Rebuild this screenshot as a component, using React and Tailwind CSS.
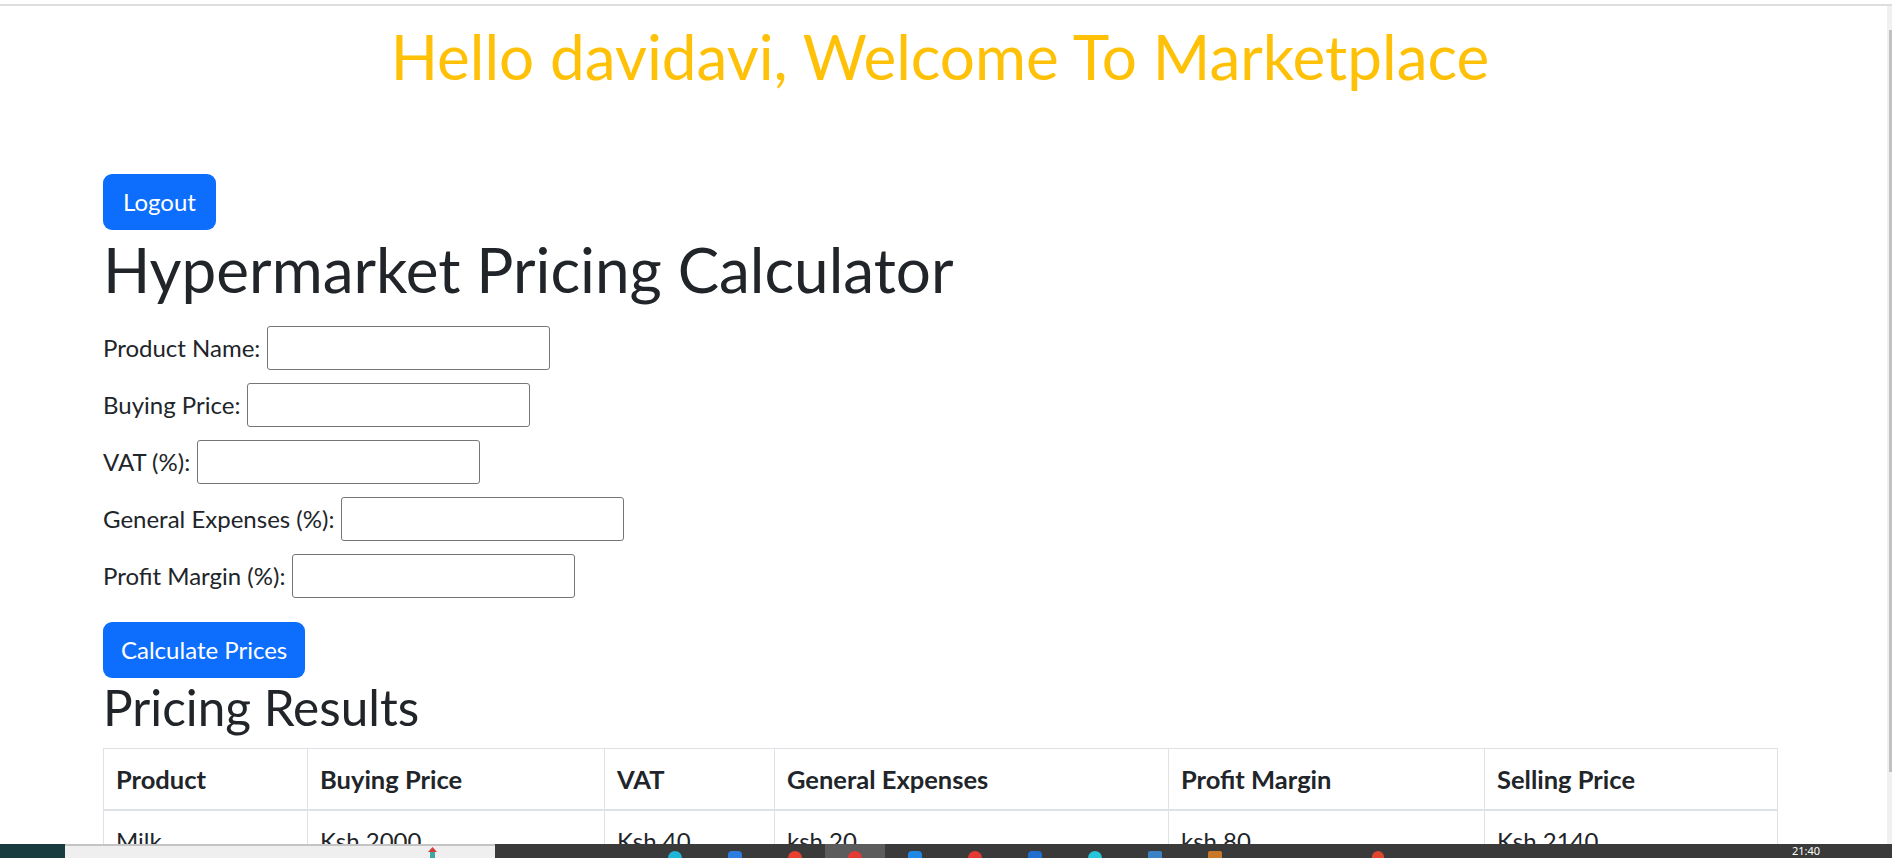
const FONT = { fontFamily: "Lato, 'Noto Sans', sans-serif" };

const fields = [
  "Product Name:",
  "Buying Price:",
  "VAT (%):",
  "General Expenses (%):",
  "Profit Margin (%):",
];

const columns = [
  { label: "Product", w: "w-[204px]" },
  { label: "Buying Price", w: "w-[297px]" },
  { label: "VAT", w: "w-[170px]" },
  { label: "General Expenses", w: "w-[394px]" },
  { label: "Profit Margin", w: "w-[316px]" },
  { label: "Selling Price", w: "w-[293px]" },
];

const rows = [["Milk", "Ksh 2000", "Ksh 40", "ksh 20", "ksh 80", "Ksh 2140"]];

// taskbar app icons, only their tops peek above the screen edge
const apps = [
  ["bg-[#1fb5d6]", "rounded-full"],
  ["bg-[#2d7de0]", "rounded-sm"],
  ["bg-[#e8402f]", "rounded-full"],
  ["bg-[#e53935]", "rounded-full", true],
  ["bg-[#1e88e5]", "rounded-sm"],
  ["bg-[#e53935]", "rounded-full"],
  ["bg-[#1e6fd0]", "rounded-sm"],
  ["bg-[#26c6da]", "rounded-full"],
  ["bg-[#3b82c4]", "rounded-[2px]"],
  ["bg-[#c9782a]", "rounded-[2px]"],
];

function Taskbar() {
  return (
    <div className="fixed left-0 right-0 bottom-0 h-[14px] flex bg-[#3a3a3a] overflow-hidden">
      <div className="w-[65px] bg-[#183b3f]" />
      <div className="w-[430px] bg-[#efefef] border-t-2 border-[#c4c4c4] flex justify-end pr-[58px] pt-[1px]">
        <div className="flex flex-col items-center">
          <div className="w-[9px] h-[5px] bg-[#d73a3a] [clip-path:polygon(50%_0,100%_100%,0_100%)]" />
          <div className="w-[5px] h-[6px] bg-[#3fa7a0]" />
        </div>
      </div>
      <div className="flex-1 flex pl-[150px]">
        {apps.map(([bg, r, active], i) => (
          <div key={i} className={`w-[60px] flex justify-center pt-[7px] ${active ? "bg-[#5c5c5c]" : ""}`}>
            <div className={`w-[14px] h-[14px] ${bg} ${r}`} />
          </div>
        ))}
        <div className="w-[103px]" />
        <div className="w-[60px] flex justify-center pt-[7px]">
          <div className="w-[12px] h-[12px] bg-[#e0452d] rounded-full" />
        </div>
        <div className="ml-auto mr-[72px] pt-[1px] text-[11px] leading-none text-white" style={{ fontFamily: "'Noto Sans', sans-serif" }}>
          21:40
        </div>
      </div>
    </div>
  );
}

export default function App() {
  return (
    <div className="relative h-[858px] overflow-hidden bg-white text-[#212529]" style={FONT}>
      <div className="h-[4px]" />
      <div className="h-[2px] bg-[#dedede]" />
      <div className="pl-[103px] w-[1777px] flex flex-col items-start">
        <h1 className="self-stretch mt-[14px] text-center text-[62px] leading-[72px] text-[#ffc107]">
          Hello davidavi, Welcome To Marketplace
        </h1>
        <button className="mt-[82px] h-[56px] px-[20px] rounded-[9px] bg-[#0d6efd] text-white text-[24px] leading-none">
          Logout
        </button>
        <h1 className="mt-[3px] text-[62px] leading-[72px]">Hypermarket Pricing Calculator</h1>
        <form className="mt-[21px] flex flex-col gap-[13px]">
          {fields.map(f => (
            <div key={f} className="flex items-center gap-[7px] h-[44px] text-[24px]">
              <label>{f}</label>
              <input type="text" className="w-[283px] h-[44px] border-[1.5px] border-[#767676] rounded-[3px] bg-white" />
            </div>
          ))}
        </form>
        <button className="mt-[24px] h-[56px] px-[18px] rounded-[9px] bg-[#0d6efd] text-white text-[24px] leading-none">
          Calculate Prices
        </button>
        <h2 className="text-[49.5px] leading-[58px] mb-[12px]">Pricing Results</h2>
        <table className="w-[1674px] table-fixed border-collapse text-[24px] leading-[36px]">
          <thead>
            <tr>
              {columns.map(c => (
                <th key={c.label} className={`${c.w} text-left text-[25.5px] font-bold px-[12px] py-[12px] border-[1.5px] border-[#dee2e6] border-b-[2px]`}>
                  {c.label}
                </th>
              ))}
            </tr>
          </thead>
          <tbody>
            {rows.map(r => (
              <tr key={r[0]}>
                {r.map((v, i) => (
                  <td key={i} className="px-[12px] py-[12px] border-[1.5px] border-[#dee2e6]">{v}</td>
                ))}
              </tr>
            ))}
          </tbody>
        </table>
      </div>
      <div className="absolute right-0 top-[6px] bottom-[14px] w-[5px] bg-[#f0f0f0] pl-[2px] pt-[24px]">
        <div className="h-[742px] bg-[#c1c1c1]" />
      </div>
      <Taskbar />
    </div>
  );
}
